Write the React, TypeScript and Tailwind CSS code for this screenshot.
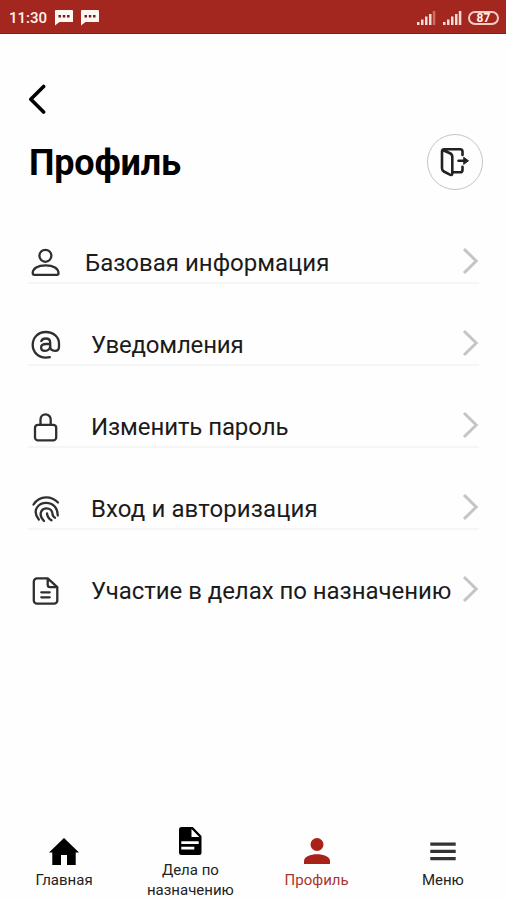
import { ReactNode } from "react";

type IconProps = { children: ReactNode };

const RowIcon = ({ children }: IconProps) => (
  <svg
    width="32"
    height="32"
    viewBox="0 0 32 32"
    fill="none"
    stroke="#2f2f2f"
    strokeWidth="2.3"
    strokeLinecap="round"
    strokeLinejoin="round"
    className="shrink-0"
  >
    {children}
  </svg>
);

const menuItems = [
  {
    label: "Базовая информация",
    text: "ml-[23px]",
    icon: (
      <RowIcon>
        <circle cx="15.4" cy="8.8" r="6" />
        <path d="M2.7 26.3c0-4.8 5-8 12.9-8s12.9 3.2 12.9 8c0 .9-.6 1.5-1.5 1.5H4.2c-.9 0-1.5-.6-1.5-1.5z" />
      </RowIcon>
    ),
  },
  {
    label: "Уведомления",
    text: "ml-[29px] tracking-[-0.2px]",
    icon: (
      <RowIcon>
        <path d="M19.8 28.200c-1.300.3-2.600.4-4 .4C8 28.600 2.700 23 2.700 15.800S8 3 15.800 3 29 8 29 14.500v3.200c0 2.600-1.300 4.100-3.900 4.100-3 0-4.900-1.300-4.900-4.300V13.500c0-2.700-1.600-4-4.400-4-2.300 0-3.900.9-4.500 2.600" />
        <path d="M19.900 15h-3.700c-3.400 0-5.100 1.200-5.100 3.400 0 2 1.500 3.400 3.900 3.400 3.200 0 5.100-2 5.100-4.500" />
      </RowIcon>
    ),
  },
  {
    label: "Изменить пароль",
    text: "ml-[29px] tracking-[-0.1px]",
    icon: (
      <RowIcon>
        <rect x="5" y="13.800" width="21.200" height="15.600" rx="3" />
        <path d="M10.500 13.500V8.500a5.100 5.100 0 0 1 10.200 0v5" />
      </RowIcon>
    ),
  },
  {
    label: "Вход и авторизация",
    text: "ml-[29px] tracking-[0.1px]",
    icon: (
      <RowIcon>
        <path d="M3.500 11.500C6.500 6.800 10.700 4.300 16 4.300c4.800 0 8.800 1.600 12 5.200" />
        <path d="M8.800 26.500c-3.400-4.400-4-8.600-1.800-12 2-3 5.200-4.600 9.200-4.600 6.600 0 11.600 4.800 11.600 12.600" />
        <path d="M14 28c-3.300-3.300-4.200-6.700-2.600-9.800 1-1.900 2.800-2.900 5-2.900 3.400 0 5.900 2.300 6.100 5.500.1 2 .9 3.200 2.500 3.900" />
        <path d="M17 20.500c.4 3.200 1.800 5.400 4.500 6.800" />
      </RowIcon>
    ),
  },
  {
    label: "Участие в делах по назначению",
    text: "ml-[29px] tracking-[-0.05px]",
    icon: (
      <RowIcon>
        <path d="M17.700 3.400H7a3.200 3.200 0 0 0-3.200 3.200v18.900A3.200 3.200 0 0 0 7 28.700h17.100a3.200 3.200 0 0 0 3.200-3.200V12.200zM17.700 3.400v6.400a2.400 2.400 0 0 0 2.400 2.400h7.200M11.300 17.300h8.400M11.300 22.300h8.400" />
      </RowIcon>
    ),
  },
];

const ChatIcon = () => (
  <svg width="18" height="16" viewBox="0 0 18 16">
    <path d="M1 0h16a1 1 0 0 1 1 1v11H4.500L0 15.500V1a1 1 0 0 1 1-1z" fill="#fff8f2" />
    <path d="M3.500 5h2.500v2.500H3.500zM7.800 5h2.500v2.500H7.800zM12 5h2.500v2.500H12z" fill="#6f1f1b" />
  </svg>
);

const SignalIcon = ({ weak }: { weak?: boolean }) => (
  <svg width="20" height="14" viewBox="0 0 20 14" fill="#f6ddd4">
    <rect x="1" y="11" width="2.500" height="3" />
    <rect x="5" y="8.500" width="2.500" height="5.500" />
    <rect x="9" y="5.500" width="2.500" height="8.500" />
    <rect x="13" y="3" width="2.500" height="11" />
    <rect x="16.800" y="0" width="2.500" height="14" opacity={weak ? 0.4 : 1} />
  </svg>
);

const navItems = [
  {
    label: "Главная",
    color: "text-[#222]",
    icon: (
      <svg width="32" height="32" viewBox="0 0 32 32" fill="#000">
        <path d="M16 3 31 17.500h-3.300v12.500H19V20h-6v10H4.300V17.500H1z" />
      </svg>
    ),
  },
  {
    label: "Дела по назначению",
    color: "text-[#222]",
    icon: (
      <svg width="32" height="32" viewBox="0 0 32 32">
        <path d="M7.500 2h11.300L27.500 11v16.500A2.500 2.500 0 0 1 25 30H7.500A2.500 2.500 0 0 1 5 27.500v-23A2.500 2.500 0 0 1 7.500 2z" fill="#000" />
        <path d="M17.500 4v8h7.800zM7.300 16.300h17.400v2.800H7.300zM7.300 21.700h13v2.800h-13z" fill="#fff" />
      </svg>
    ),
  },
  {
    label: "Профиль",
    color: "text-[#a8352f]",
    icon: (
      <svg width="32" height="32" viewBox="0 0 32 32" fill="#a92219">
        <circle cx="16" cy="9.500" r="6.500" />
        <path d="M3 29v-3c0-4.500 6.500-6.800 13-6.800S29 21.500 29 26v3z" />
      </svg>
    ),
  },
  {
    label: "Меню",
    color: "text-[#222]",
    icon: (
      <svg width="32" height="32" viewBox="0 0 32 32" fill="#333">
        <path d="M3.300 7.500h25.400v3.200H3.300zM3.300 14.800h25.400V18H3.300zM3.300 22h25.400v3.200H3.300z" />
      </svg>
    ),
  },
];

const App = () => {
  return (
    <div className="flex h-screen w-full flex-col overflow-hidden bg-[#fefefe] font-[Roboto,sans-serif] text-black">
      <header className="flex h-[34px] shrink-0 items-center border-b border-[#8e1a14] bg-[#a4271f] pr-[7px] pl-[9px] text-[#fff3ea]">
        <span className="w-[46px] pt-[3px] text-[15px] font-medium">11:30</span>
        <div className="flex gap-2 pt-[3px]">
          <ChatIcon />
          <ChatIcon />
        </div>
        <div className="ml-auto flex items-center gap-[6px] pt-[2px]">
          <SignalIcon weak />
          <SignalIcon />
          <span className="flex h-[14px] w-[31px] items-center justify-center rounded-full border-2 border-[#f3cdc3] text-[12px] leading-none font-bold">
            87
          </span>
        </div>
      </header>

      <main className="flex-1 pr-[27px] pl-7">
        <button className="mt-[50px] block">
          <svg width="20" height="30" viewBox="0 0 20 30" fill="none" stroke="#000" strokeWidth="3.600" strokeLinecap="round" strokeLinejoin="round">
            <path d="M15.600 2.500 2.800 15.200 15.600 28" />
          </svg>
        </button>

        <div className="mt-5 -mr-1 flex h-14 items-center justify-between">
          <h1 className="ml-px pt-[2px] text-[36px] font-bold tracking-[-0.2px]">Профиль</h1>
          <button className="flex size-14 items-center justify-center rounded-full border border-[#c4c4c4]">
            <svg width="30" height="30" viewBox="0 0 30 30" fill="none" stroke="#222" strokeWidth="2.600" strokeLinecap="round" strokeLinejoin="round">
              <path d="M3.200 3.200 10 6.300c1.500.7 2.300 1.800 2.300 3.500v16.400c0 1.600-1 2.200-2.400 1.500l-6-3.200c-1.300-.7-1.900-1.700-1.900-3.200V4.500c0-1.400.7-2.200 2.200-2.200h16c1.500 0 2.300.8 2.300 2.300V8M12.500 25.200h7.700c1.500 0 2.300-.8 2.300-2.300v-3.200M18.500 13.800h7" />
              <path d="m24 10.500 4.500 3.300-4.500 3.300z" fill="#222" strokeWidth="1" />
            </svg>
          </button>
        </div>

        <nav className="mt-3">
          {menuItems.map((item, i) => (
            <a
              key={item.label}
              className={
                i < menuItems.length - 1
                  ? "flex h-[82px] items-center border-b-2 border-[#f5f5f5] pt-[42px] pl-[2px]"
                  : "flex h-[82px] items-center border-b-2 border-transparent pt-[42px] pl-[2px]"
              }
            >
              {item.icon}
              <span className={`text-[24px] leading-none whitespace-nowrap text-[#1b1b1b] ${item.text}`}>
                {item.label}
              </span>
              <svg width="18" height="28" viewBox="0 0 18 28" fill="none" stroke="#c5c5c5" strokeWidth="3" className="mb-[5px] ml-auto shrink-0">
                <path d="M3 2 15.200 14 3 26" />
              </svg>
            </a>
          ))}
        </nav>
      </main>

      <footer className="grid h-[76px] shrink-0 grid-cols-4 items-end pl-px">
        {navItems.map((item) => (
          <a
            key={item.label}
            className={
              item.label.includes(" ")
                ? `flex flex-col items-center gap-[3px] px-3 text-center text-[15px] leading-5 ${item.color}`
                : `flex flex-col items-center gap-[3px] pb-[10px] text-center text-[15px] leading-5 ${item.color}`
            }
          >
            {item.icon}
            {item.label}
          </a>
        ))}
      </footer>
    </div>
  );
};

export default App;
